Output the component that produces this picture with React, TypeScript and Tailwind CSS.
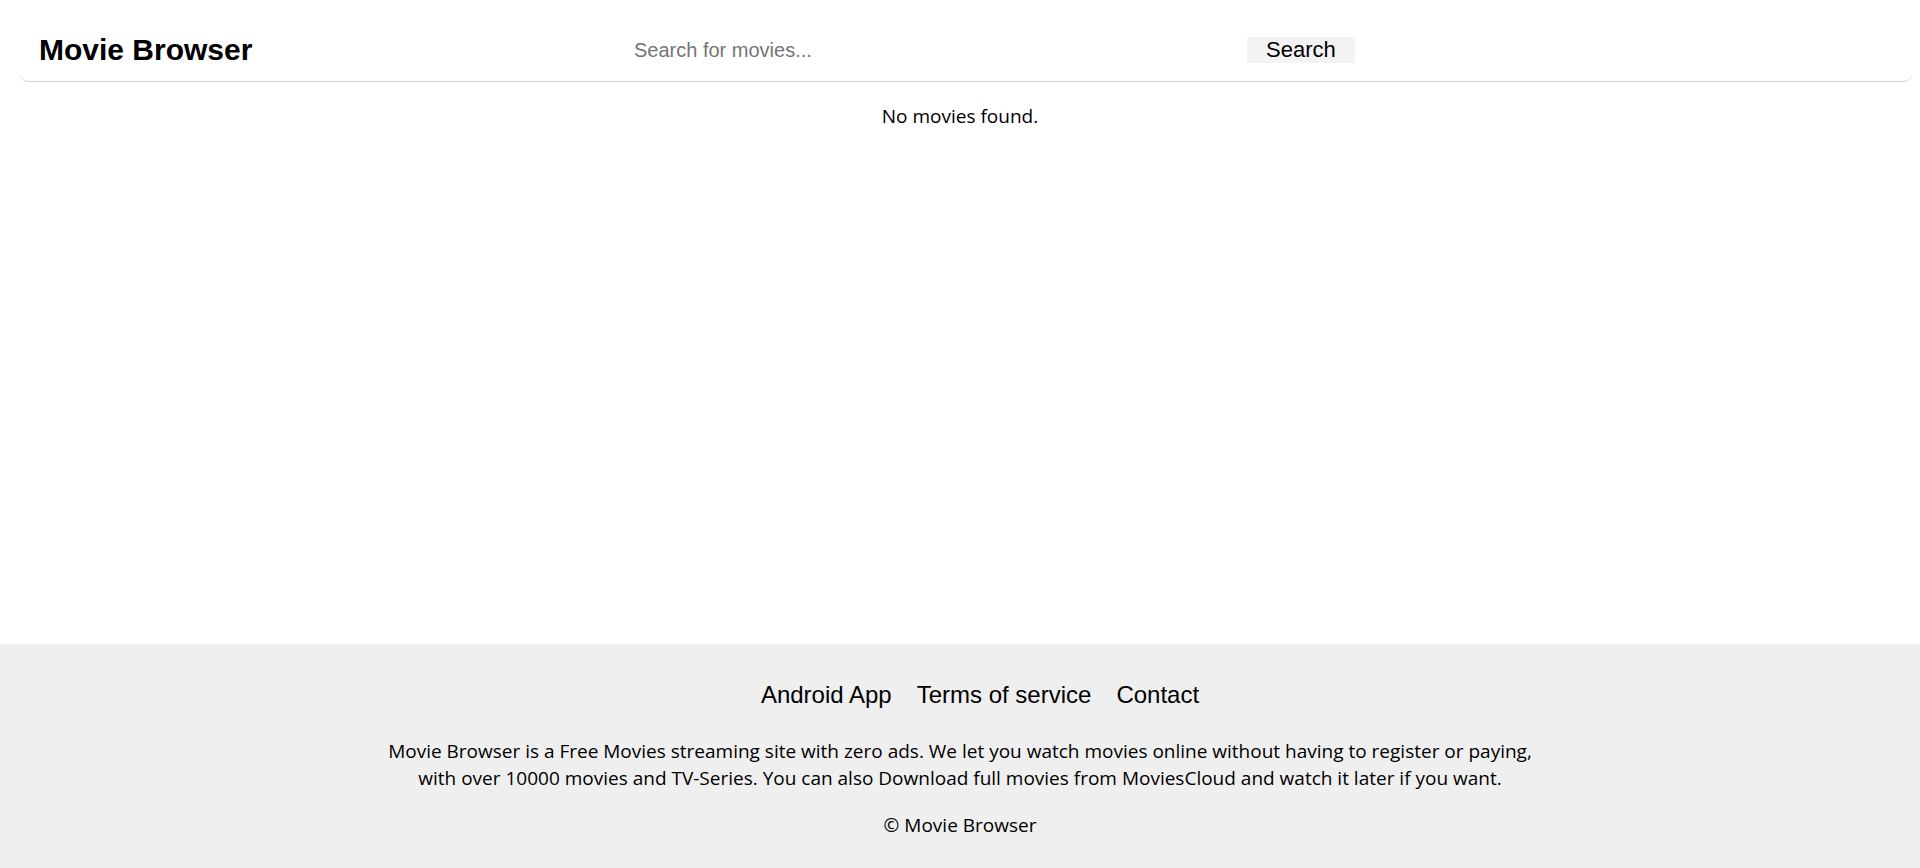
import {useState} from "react";

function Header() {
  const [query, setQuery] = useState("");
  return (
    <header className="ml-5 mr-2 flex h-[82px] items-center rounded-lg border-b border-[#d3d3d3] pl-[19px] pt-[19px]">
      <div className="w-[583px] shrink-0">
        <h1 className="font-['Liberation_Sans',Arial,sans-serif] text-[30px] font-bold leading-[34px] text-black">
          Movie Browser
        </h1>
      </div>
      <form
        className="flex items-center"
        onSubmit={(e) => e.preventDefault()}
      >
        <input
          type="text"
          value={query}
          onChange={(e) => setQuery(e.target.value)}
          placeholder="Search for movies..."
          className="w-[625px] bg-transparent px-3 font-['Liberation_Sans',Arial,sans-serif] text-[20px] leading-[26px] text-black outline-none placeholder:text-[#757575]"
        />
        <button
          type="submit"
          className="h-[26px] bg-[#f3f3f3] px-[19px] font-['Liberation_Sans',Arial,sans-serif] text-[22px] leading-[26px] text-black"
        >
          Search
        </button>
      </form>
    </header>
  );
}

function Footer() {
  return (
    <footer className="bg-[#efefef] px-5 pb-[29px] pt-[37px] text-center">
      {/* links footer */}
      <ul className="flex justify-center gap-[25px] pl-10 font-['Liberation_Sans',Arial,sans-serif] text-[24px] leading-[28px] text-black">
        <li><a href="#">Android App</a></li>
        <li><a href="#">Terms of service</a></li>
        <li><a href="#">Contact</a></li>
      </ul>
      <p className="mx-auto mt-[29px] max-w-[1160px] font-['Open_Sans',sans-serif] text-[19px] leading-[27px] text-black">
        Movie Browser is a Free Movies streaming site with zero ads. We let you
        watch movies online without having to register or paying, with over
        10000 movies and TV-Series. You can also Download full movies from
        MoviesCloud and watch it later if you want.
      </p>
      <p className="mt-5 font-['Open_Sans',sans-serif] text-[19px] leading-[27px] text-black">
        © Movie Browser
      </p>
    </footer>
  );
}

export default function App() {
  return (
    <div className="flex min-h-screen flex-col bg-white">
      <Header />
      <main className="flex-1 pt-[21px] text-center">
        <p className="font-['Open_Sans',sans-serif] text-[19px] leading-[27px] text-black">
          No movies found.
        </p>
      </main>
      <Footer />
    </div>
  );
}
